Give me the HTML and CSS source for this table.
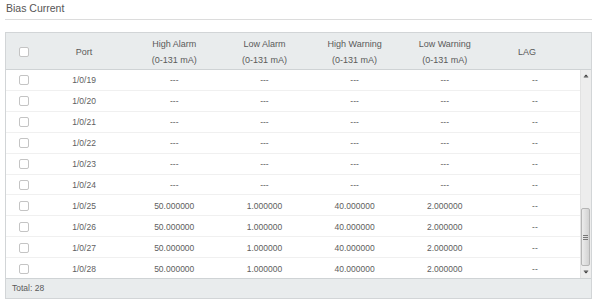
FILE: index.html
```html
<!DOCTYPE html>
<html>
<head>
<meta charset="utf-8">
<link rel="stylesheet" href="styles.css">
</head>
<body>
<div class="panel">
  <div class="title">Bias Current</div>
  <div class="grid-box">
    <div class="thead">
      <div class="cell chk"><span class="cb"></span></div>
      <div class="cell">Port</div>
      <div class="cell">High Alarm<br>(0-131 mA)</div>
      <div class="cell">Low Alarm<br>(0-131 mA)</div>
      <div class="cell">High Warning<br>(0-131 mA)</div>
      <div class="cell">Low Warning<br>(0-131 mA)</div>
      <div class="cell lag">LAG</div>
    </div>
    <div class="tbody">
      <div class="rows">
        <div class="row"><div class="cell chk"><span class="cb"></span></div><div class="cell">1/0/19</div><div class="cell">---</div><div class="cell">---</div><div class="cell">---</div><div class="cell">---</div><div class="cell">--</div></div>
        <div class="row"><div class="cell chk"><span class="cb"></span></div><div class="cell">1/0/20</div><div class="cell">---</div><div class="cell">---</div><div class="cell">---</div><div class="cell">---</div><div class="cell">--</div></div>
        <div class="row"><div class="cell chk"><span class="cb"></span></div><div class="cell">1/0/21</div><div class="cell">---</div><div class="cell">---</div><div class="cell">---</div><div class="cell">---</div><div class="cell">--</div></div>
        <div class="row"><div class="cell chk"><span class="cb"></span></div><div class="cell">1/0/22</div><div class="cell">---</div><div class="cell">---</div><div class="cell">---</div><div class="cell">---</div><div class="cell">--</div></div>
        <div class="row"><div class="cell chk"><span class="cb"></span></div><div class="cell">1/0/23</div><div class="cell">---</div><div class="cell">---</div><div class="cell">---</div><div class="cell">---</div><div class="cell">--</div></div>
        <div class="row"><div class="cell chk"><span class="cb"></span></div><div class="cell">1/0/24</div><div class="cell">---</div><div class="cell">---</div><div class="cell">---</div><div class="cell">---</div><div class="cell">--</div></div>
        <div class="row"><div class="cell chk"><span class="cb"></span></div><div class="cell">1/0/25</div><div class="cell">50.000000</div><div class="cell">1.000000</div><div class="cell">40.000000</div><div class="cell">2.000000</div><div class="cell">--</div></div>
        <div class="row"><div class="cell chk"><span class="cb"></span></div><div class="cell">1/0/26</div><div class="cell">50.000000</div><div class="cell">1.000000</div><div class="cell">40.000000</div><div class="cell">2.000000</div><div class="cell">--</div></div>
        <div class="row"><div class="cell chk"><span class="cb"></span></div><div class="cell">1/0/27</div><div class="cell">50.000000</div><div class="cell">1.000000</div><div class="cell">40.000000</div><div class="cell">2.000000</div><div class="cell">--</div></div>
        <div class="row last"><div class="cell chk"><span class="cb"></span></div><div class="cell">1/0/28</div><div class="cell">50.000000</div><div class="cell">1.000000</div><div class="cell">40.000000</div><div class="cell">2.000000</div><div class="cell">--</div></div>
      </div>
      <div class="vscroll">
        <div class="sbtn">
          <svg width="11" height="11" viewBox="0 0 11 11"><path d="M3 7h5L5.5 4.5z" fill="#333"/><path d="M3 7.5h5" stroke="#888" stroke-width="1"/></svg>
        </div>
        <div class="strack">
          <div class="sthumb">
            <svg width="5" height="5" viewBox="0 0 5 5"><path d="M0 0.5h5M0 2.5h5M0 4.5h5" stroke="#777" stroke-width="1"/></svg>
          </div>
        </div>
        <div class="sbtn">
          <svg width="11" height="11" viewBox="0 0 11 11"><path d="M3 4h5L5.5 6.5z" fill="#333"/><path d="M3 3.5h5" stroke="#888" stroke-width="1"/></svg>
        </div>
      </div>
    </div>
    <div class="tfoot">Total: 28</div>
  </div>
</div>
</body>
</html>
```

FILE: styles.css
```css
html, body {
  margin: 0;
  padding: 0;
  background: #fff;
}
.panel {
  padding: 2px 8px 0 5px;
  font-family: "Liberation Sans", Arial, sans-serif;
  color: #5e5e5e;
}
.title {
  font-size: 10.5px;
  line-height: 13px;
  padding: 0 0 4px 1px;
  border-bottom: 1px solid #dcdcdc;
  color: #555;
}
.grid-box {
  margin-top: 12px;
  border: 1px solid #d2d5d7;
}
.thead {
  display: grid;
  grid-template-columns: 33px repeat(6, 1fr);
  padding-right: 11px;
  padding-top: 2px;
  height: 37px;
  box-sizing: border-box;
  background: #e9eced;
  border-bottom: 1px solid #cfd3d5;
  font-size: 9px;
  line-height: 16px;
  color: #5a5a5a;
}
.thead .cell {
  display: flex;
  align-items: center;
  justify-content: center;
  text-align: center;
}
.thead .cell.lag {
  padding-right: 16px;
}
.tbody {
  display: flex;
  height: 208px;
}
.rows {
  flex: 1;
  display: flex;
  flex-direction: column;
}
.row {
  display: grid;
  grid-template-columns: 33px repeat(6, 1fr);
  flex: 1;
  padding-top: 1px;
  box-sizing: border-box;
  border-bottom: 1px solid #f0f0f0;
  font-size: 8.5px;
  color: #606060;
}
.row.last {
  border-bottom: 0;
}
.row .cell {
  display: flex;
  align-items: center;
  justify-content: center;
}
.cell.chk {
  justify-content: flex-start;
  padding-left: 13px;
}
.cb {
  display: block;
  width: 10px;
  height: 10px;
  box-sizing: border-box;
  border: 1px solid #c4c4c4;
  border-radius: 2px;
  background: #fff;
}
.vscroll {
  width: 11px;
  display: flex;
  flex-direction: column;
  background: #ededed;
  border-left: 1px solid #e2e2e2;
  box-sizing: border-box;
}
.sbtn {
  height: 11px;
  flex: none;
  display: flex;
  align-items: center;
  justify-content: center;
}
.sbtn svg {
  display: block;
}
.strack {
  flex: 1;
  display: flex;
  flex-direction: column;
  justify-content: flex-end;
  padding: 0 1px 1px 0;
}
.sthumb {
  height: 58px;
  box-sizing: border-box;
  border: 1px solid #b5b5b5;
  border-radius: 2px;
  background: linear-gradient(to right, #ececec, #d2d2d2);
  display: flex;
  align-items: center;
  justify-content: center;
}
.sthumb svg {
  display: block;
}
.tfoot {
  height: 20px;
  box-sizing: border-box;
  border-top: 1px solid #cfd3d5;
  background: #e9eced;
  font-size: 8.5px;
  line-height: 19px;
  padding-left: 6px;
  color: #5a5a5a;
}
```
